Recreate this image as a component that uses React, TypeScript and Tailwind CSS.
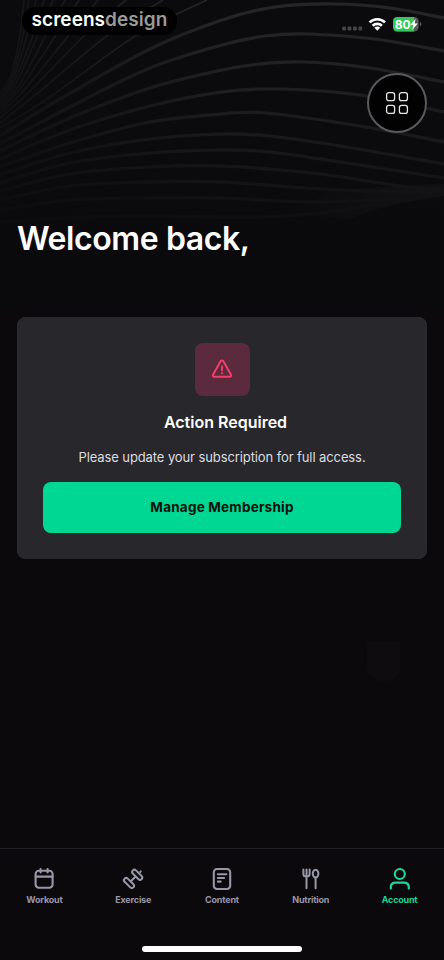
import type { ReactNode } from 'react'

type Point = [number, number]

const waves: Point[][] = [
  [[0, 92], [11, 75], [20, 35], [24, 0]],
  [[0, 95], [12, 78], [23, 35], [29, 0]],
  [[0, 98], [13, 80], [27, 35], [36, 0]],
  [[0, 101], [14, 82], [33, 35], [44, 0]],
  [[0, 104], [15, 86], [38, 35], [53, 0]],
  [[0, 107], [18, 87], [46, 35], [65, 0]],
  [[0, 110], [20, 89], [56, 35], [79, 0]],
  [[0, 114], [25, 89], [69, 35], [98, 0]],
  [[0, 118], [30, 91], [85, 35], [126, 0]],
  [[0, 123], [40, 91], [108, 35], [163, 0]],
  [[0, 128], [50, 97], [137, 35], [207, 0]],
  [[0, 136], [60, 99], [150, 49], [222, 20], [275, 7], [333, 4], [390, 8], [444, 18]],
  [[0, 144], [70, 107], [150, 68], [222, 45], [265, 36], [310, 34], [375, 39], [444, 51]],
  [[0, 151], [70, 118], [150, 88], [222, 70], [260, 64], [305, 62], [370, 68], [444, 82]],
  [[0, 159], [70, 130], [150, 106], [222, 92], [280, 89], [360, 95], [444, 112]],
  [[0, 167], [70, 143], [150, 122], [222, 114], [265, 113], [360, 126], [444, 142]],
  [[0, 175], [70, 153], [150, 139], [222, 134], [270, 136], [340, 146], [444, 164]],
  [[0, 183], [70, 163], [150, 153], [222, 150], [270, 152], [340, 162], [444, 178]],
  [[0, 191], [70, 174], [150, 167], [222, 166], [320, 174], [400, 186], [444, 190]],
  [[0, 200], [70, 186], [150, 182], [222, 182], [320, 189], [400, 192], [444, 191]],
  [[0, 210], [70, 200], [150, 198], [222, 198], [310, 202], [400, 199]],
  [[0, 222], [80, 217], [150, 216], [260, 217], [330, 212], [375, 204]],
]

// smooth curve through all points (Catmull-Rom converted to beziers)
function toPath(pts: Point[]) {
  let d = `M${pts[0][0]} ${pts[0][1]}`
  for (let i = 0; i < pts.length - 1; i++) {
    const a = pts[Math.max(0, i - 1)]
    const b = pts[i]
    const c = pts[i + 1]
    const e = pts[Math.min(pts.length - 1, i + 2)]
    d += `C${b[0] + (c[0] - a[0]) / 6} ${b[1] + (c[1] - a[1]) / 6} ${c[0] - (e[0] - b[0]) / 6} ${c[1] - (e[1] - b[1]) / 6} ${c[0]} ${c[1]}`
  }
  return d
}

function Waves() {
  return (
    <svg className="absolute inset-0" width="444" height="310" viewBox="0 0 444 310" fill="none">
      <defs>
        <linearGradient id="fade" x1="0" y1="0" x2="0" y2="230" gradientUnits="userSpaceOnUse">
          <stop offset="0" stopColor="#262629" />
          <stop offset="0.5" stopColor="#1c1c1e" />
          <stop offset="0.8" stopColor="#141416" />
          <stop offset="1" stopColor="#0d0d0f" />
        </linearGradient>
        <linearGradient id="left" x1="0" y1="0" x2="444" y2="0" gradientUnits="userSpaceOnUse">
          <stop offset="0" stopColor="#0b0b0d" stopOpacity="0.65" />
          <stop offset="0.5" stopColor="#0b0b0d" stopOpacity="0" />
        </linearGradient>
        <linearGradient id="band" x1="290" y1="0" x2="400" y2="0" gradientUnits="userSpaceOnUse">
          <stop offset="0" stopColor="#111113" stopOpacity="0" />
          <stop offset="1" stopColor="#111113" />
        </linearGradient>
      </defs>
      <path d="M444 184 L400 186 L330 190 L290 214 L350 219 L372 210 L400 203 L444 196Z" fill="url(#band)" />
      {waves.map((w, i) => (
        <path key={i} d={toPath(w)} stroke="url(#fade)" strokeWidth={i < 11 ? 1.7 : 3.2} />
      ))}
      <rect width="444" height="310" fill="url(#left)" />
    </svg>
  )
}

function StatusIcons() {
  return (
    <svg className="absolute left-[340px] top-[14px]" width="84" height="20" viewBox="340 14 84 20">
      {[344, 349.4, 354.8, 360.2].map(x => <rect key={x} x={x - 1.8} y="26.6" width="3.8" height="3.8" rx="1.2" fill="#454547" />)}
      <g fill="none" stroke="#fff" strokeWidth="2.7">
        <path d="M369.6 22.4a11 11 0 0 1 15.4 0" />
        <path d="M372.7 25.8a6.6 6.6 0 0 1 9.2 0" />
      </g>
      <path d="M377.3 30.8l-2.9-3a4.2 4.2 0 0 1 5.8 0z" fill="#fff" />
      <clipPath id="battery"><rect x="393" y="17" width="25.6" height="14.4" rx="4.2" /></clipPath>
      <g clipPath="url(#battery)">
        <rect x="393" y="17" width="26" height="15" fill="#57575a" />
        <rect x="393" y="17" width="21" height="15" fill="#34c759" />
      </g>
      <path d="M419.8 22v4.4q1.5-.6 1.5-2.2t-1.5-2.2z" fill="#57575a" />
      <text x="394.8" y="28.5" fontSize="12" fontWeight="700" fill="#fff" className="font-['Inter',sans-serif]">80</text>
      <path d="M415.6 18.8l-5.2 6.2h3l-1 4.8 5.4-6.3h-3.1z" fill="#fff" />
    </svg>
  )
}

function Icon({ children }: { children: ReactNode }) {
  return (
    <svg width="24" height="24" viewBox="0 0 24 24" fill="none" stroke="currentColor" strokeWidth="2.1" strokeLinecap="round" strokeLinejoin="round">
      {children}
    </svg>
  )
}

const tabs = [
  {
    name: 'Workout',
    icon: <><rect x="3.6" y="3.8" width="17" height="17" rx="3.2" /><path d="M3.6 9.6h17M8.6 2v3.4M15.6 2v3.4" /></>,
  },
  {
    name: 'Exercise',
    icon: (
      <g strokeWidth="2">
        <rect x="-2.2" y="-6.2" width="4.4" height="12.4" rx="2.2" transform="translate(8 16) rotate(-45)" />
        <rect x="-2.2" y="-6.2" width="4.4" height="12.4" rx="2.2" transform="translate(16.2 7.8) rotate(-45)" />
        <path d="M9.8 14.3l4.6-4.6M19.2 5l.6-.6" />
      </g>
    ),
  },
  {
    name: 'Content',
    icon: <><rect x="3.8" y="2" width="16.4" height="20" rx="3.2" /><path d="M7.9 7.3h8.4M7.9 11h6.2M7.9 14.6h2.8" /></>,
  },
  {
    name: 'Nutrition',
    icon: (
      <g strokeWidth="2">
        <path d="M4.4 2.6v4.6q0 2.2 3.1 2.2t3.1-2.2V2.6M7.5 2.6v18.6" />
        <ellipse cx="16.6" cy="6.6" rx="2.8" ry="3.8" />
        <path d="M16.6 10.6v10.6" />
      </g>
    ),
  },
  {
    name: 'Account',
    icon: <g strokeWidth="2.2"><circle cx="11.8" cy="7" r="5" /><path d="M2.8 21.6v-1.2q0-4.8 4.8-4.8h8.4q4.8 0 4.8 4.8v1.2" /></g>,
  },
]

export default function App() {
  return (
    <main className="relative flex h-[960px] w-[444px] flex-col overflow-hidden bg-[#0b090c] font-['Inter',sans-serif] text-white">
      <header className="relative h-[309px] bg-[#0b0b0d] bg-linear-to-b from-[#0b0a0c] via-[#0b0b0d] to-[#0a0a0d] pt-[217px] pl-[17px]">
        <Waves />
        <div className="absolute left-[22px] top-[7px] flex h-[28px] w-[155px] justify-center rounded-full bg-black text-[19px] leading-[26px] font-semibold tracking-[0.05px]">
          <span>screens</span><span className="text-[#9a9a9a]">design</span>
        </div>
        <StatusIcons />
        <button aria-label="Menu" className="absolute left-[367px] top-[73px] flex size-[60px] items-center justify-center rounded-full border-2 border-[#5a5a5c] bg-[#020203]">
          <svg width="24" height="24" viewBox="0 0 24 24" fill="none" stroke="#e8e8e8" strokeWidth="1.3">
            <rect x="1.6" y="1.6" width="8" height="8" rx="2.2" />
            <rect x="14.4" y="1.6" width="8" height="8" rx="2.2" />
            <rect x="1.6" y="14.4" width="8" height="8" rx="2.2" />
            <rect x="14.4" y="14.4" width="8" height="8" rx="2.2" />
          </svg>
        </button>
        <h1 className="relative text-[32px] leading-[44px] font-semibold tracking-[-0.42px]">Welcome back,</h1>
      </header>

      <section className="mx-[17px] mt-[8px] flex h-[242px] flex-col items-center rounded-[8px] border border-[#2a292e] bg-[#28272c] px-[25px] pt-[24.5px]">
        <div className="flex h-[53px] w-[55px] shrink-0 items-center justify-center rounded-[8px] bg-[#5c2a3d] text-[#f43f70]">
          <svg width="22" height="22" viewBox="0 0 22 22" fill="none" stroke="currentColor" strokeWidth="1.9" strokeLinecap="round" strokeLinejoin="round">
            <path d="M9.6 3.2q1.4-1.7 2.8 0L20 16.8q.7 2-1.4 2H3.4q-2.1 0-1.4-2z" />
            <path d="M11 8.2v4.2M11 15v.2" />
          </svg>
        </div>
        <h2 className="mt-[14.5px] pl-[7px] text-[16px] leading-[24px] font-semibold">Action Required</h2>
        <p className="mt-[13px] text-[13px] leading-[20px] tracking-[-0.1px] whitespace-nowrap text-[#dddde0]">Please update your subscription for full access.</p>
        <button className="mt-[15px] h-[51px] w-full shrink-0 rounded-[8px] bg-[#00d792] text-[13.5px] font-bold tracking-[0.22px] text-[#07100d]">Manage Membership</button>
      </section>

      <div className="mt-[83px] ml-[367px] h-[39px] w-[33px] rounded-b-[14px] bg-[#0e0c0f]" />

      <nav className="mt-auto grid h-[112px] shrink-0 grid-cols-5 border-t border-[#232125] pt-[18px] text-[#9797a9]">
        {tabs.map(tab => (
          <a key={tab.name} className={tab.name === 'Account' ? 'flex flex-col items-center text-[#1fd597]' : 'flex flex-col items-center'}>
            <Icon>{tab.icon}</Icon>
            <span className="mt-[3px] text-[9px] leading-[12px] font-bold tracking-[-0.2px]">{tab.name}</span>
          </a>
        ))}
      </nav>
      <div className="absolute bottom-[8px] left-[142px] h-[6px] w-[160px] rounded-full bg-white" />
    </main>
  )
}
